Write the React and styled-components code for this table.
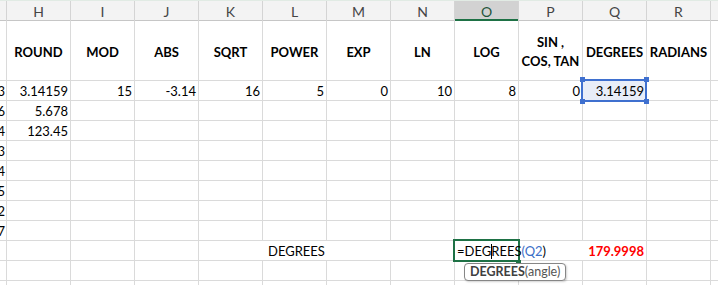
import React from 'react'
import styled, { createGlobalStyle } from 'styled-components'

const GlobalStyle = createGlobalStyle`
    html, body {
        margin: 0;
        padding: 0;
        background: #ffffff;
        overflow: hidden;
    }
    body {
        font-family: Lato, "Liberation Sans", sans-serif;
    }
`

// G (cut off), H..R, S (cut off)
const COLS = '6px repeat(11, 63px) 7px'

const letters = ['', 'H', 'I', 'J', 'K', 'L', 'M', 'N', 'O', 'P', 'Q', 'R', '']

const titles = ['', 'ROUND', 'MOD', 'ABS', 'SQRT', 'POWER', 'EXP', 'LN', 'LOG', 'SIN ,\nCOS, TAN', 'DEGREES', 'RADIANS', '']

const valueRow = ['3', '3.14159', '15', '-3.14', '16', '5', '0', '10', '8', '0', null, '', '']

// column G only shows the last digit of each number, then column H
const leftDigits = ['6', '4', '3', '4', '5', '2', '7']
const columnH = ['5.678', '123.45', '', '', '', '', '']

class App extends React.Component {

    renderPlainRow(key, first, second) {
        const cells = [
            <Cell key="g" $align="right" $clip>{first}</Cell>,
            <Cell key="h" $align="right">{second}</Cell>,
        ]
        for (let i = 2; i < 13; i++) {
            cells.push(<Cell key={i} />)
        }
        return <React.Fragment key={key}>{cells}</React.Fragment>
    }

    render() {
        return (
            <Sheet>
                <GlobalStyle />
                <ColumnHeaders>
                    {letters.map((l, i) => (
                        <ColHead key={i} $active={l === 'O'}>{l}</ColHead>
                    ))}
                </ColumnHeaders>

                <Grid>
                    {titles.map((t, i) => (
                        <TitleCell key={'t' + i}>{t}</TitleCell>
                    ))}

                    {valueRow.map((v, i) => (
                        v === null ? (
                            <RangeCell key={'v' + i} $align="right">
                                3.14159
                                <RangeFrame />
                                <Handle $x={-3} $y={-4} />
                                <Handle $x={61} $y={-4} />
                                <Handle $x={-3} $y={18} />
                                <Handle $x={61} $y={18} />
                            </RangeCell>
                        ) : (
                            <Cell key={'v' + i} $align="right" $clip={i === 0}>{v}</Cell>
                        )
                    ))}

                    {leftDigits.map((d, i) => this.renderPlainRow('r' + i, d, columnH[i]))}

                    {/* row 10 */}
                    <Cell $clip />
                    <Cell />
                    <Cell />
                    <Cell />
                    <LabelCell>DEGREES</LabelCell>
                    <EditCell>
                        <ActiveFrame />
                        <FillHandle />
                        <FormulaText>
                            =DEG<Caret />REES<RefText>(Q2</RefText>)
                        </FormulaText>
                        <Tooltip>
                            <TipName>DEGREES</TipName>
                            <TipArg>(angle)</TipArg>
                        </Tooltip>
                    </EditCell>
                    <ResultCell $align="right">179.9998</ResultCell>
                    <Cell />
                    <Cell />

                    {this.renderPlainRow('r11', '', '')}
                    {this.renderPlainRow('r12', '', '')}
                </Grid>
            </Sheet>
        )
    }
}

const Sheet = styled.div`
    width: 718px;
    height: 285px;
    overflow: hidden;
    background: #ffffff;
`

const ColumnHeaders = styled.div`
    display: grid;
    grid-template-columns: ${COLS};
    column-gap: 1px;
    background: #d4d4d4;
    border-top: 1px solid #e1ebe4;
`

const ColHead = styled.div`
    box-sizing: border-box;
    height: 20px;
    display: flex;
    align-items: center;
    justify-content: center;
    background: ${p => (p.$active ? '#d2d2d2' : '#f3f3f3')};
    border-bottom: 1px solid ${p => (p.$active ? '#1e7145' : '#c6c6c6')};
    box-shadow: ${p => (p.$active ? 'inset 0 -1px 0 #1e7145' : 'none')};
    color: ${p => (p.$active ? '#24553b' : '#454545')};
    font-size: 14px;
    padding-top: 1px;
`

const Grid = styled.div`
    display: grid;
    grid-template-columns: ${COLS};
    grid-template-rows: 59px repeat(12, 19px);
    gap: 1px;
    background: #dadada;
`

const Cell = styled.div`
    background: #ffffff;
    display: flex;
    align-items: flex-end;
    justify-content: ${p => (p.$align === 'right' ? 'flex-end' : 'flex-start')};
    padding: ${p => (p.$clip ? '0 1px 0 0' : '0 2px')};
    overflow: ${p => (p.$clip ? 'hidden' : 'visible')};
    white-space: nowrap;
    font-size: 13px;
    line-height: 17px;
    color: #000000;
`

const TitleCell = styled.div`
    background: #ffffff;
    display: flex;
    align-items: center;
    justify-content: center;
    text-align: center;
    padding-top: 3px;
    white-space: pre-line;
    font-size: 13px;
    font-weight: bold;
    line-height: 19px;
    color: #000000;
`

const RangeCell = styled(Cell)`
    position: relative;
    background: #e8edf8;
`

const RangeFrame = styled.div`
    position: absolute;
    left: -2px;
    top: -2px;
    width: 66px;
    height: 23px;
    box-sizing: border-box;
    border: 2px solid #3f70cf;
`

const Handle = styled.div`
    position: absolute;
    left: ${p => p.$x}px;
    top: ${p => p.$y}px;
    width: 5px;
    height: 5px;
    background: #3f70cf;
`

const LabelCell = styled(Cell)`
    grid-column: span 4;
    padding-left: 69px;
`

const EditCell = styled.div`
    grid-column: span 2;
    margin-right: -1px;
    position: relative;
    z-index: 2;
    background: #ffffff;
    display: flex;
    align-items: flex-end;
    padding: 0 2px;
    font-size: 13px;
    line-height: 17px;
    white-space: nowrap;
    color: #000000;
`

const ActiveFrame = styled.div`
    position: absolute;
    left: -2px;
    top: -2px;
    width: 67px;
    height: 23px;
    box-sizing: border-box;
    border: 2px solid #1e7145;
`

const FillHandle = styled.div`
    position: absolute;
    left: 61px;
    top: 19px;
    width: 5px;
    height: 4px;
    background: #1e7145;
`

const FormulaText = styled.span`
    position: relative;
`

const Caret = styled.span`
    display: inline-block;
    width: 1px;
    height: 15px;
    margin-right: -1px;
    vertical-align: -3px;
    background: #000000;
`

const RefText = styled.span`
    color: #3b6fc8;
`

const Tooltip = styled.div`
    position: absolute;
    left: 9px;
    top: 22px;
    height: 18px;
    box-sizing: border-box;
    display: flex;
    align-items: center;
    padding: 0 5px;
    border: 1px solid #868686;
    border-radius: 4px;
    background: #ffffff;
    box-shadow: 1px 1px 2px rgba(0, 0, 0, 0.18);
    font-size: 12.5px;
    line-height: 14px;
`

const TipName = styled.span`
    font-weight: bold;
    color: #404040;
`

const TipArg = styled.span`
    color: #555555;
`

const ResultCell = styled(Cell)`
    font-weight: bold;
    color: #ff0000;
`

export default App
